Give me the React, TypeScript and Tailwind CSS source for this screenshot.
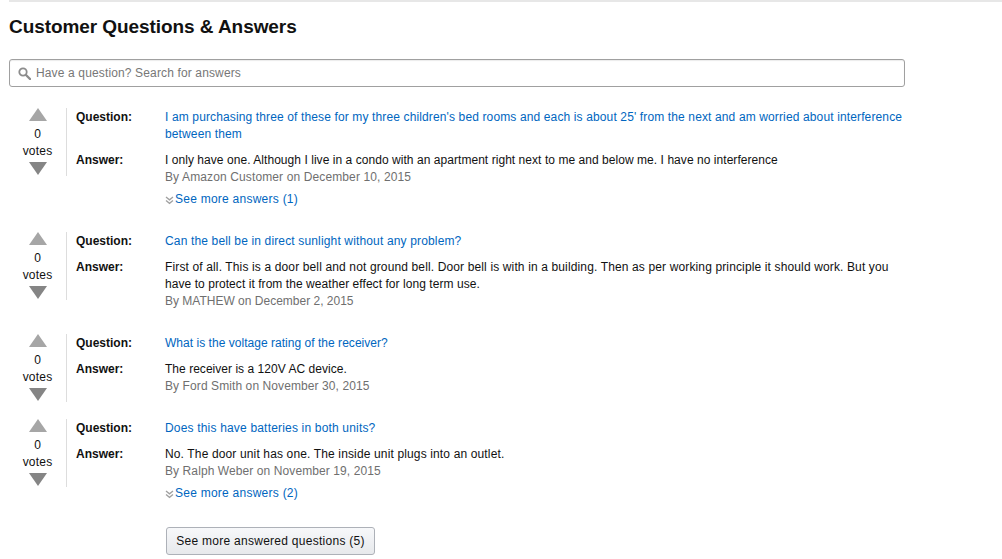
import type { ReactNode } from "react";

const rows: { q: string; qt: string; a: ReactNode; at: string; by: string; bt: string; more?: string }[] = [
  {
    q: "I am purchasing three of these for my three children's bed rooms and each is about 25' from the next and am worried about interference between them",
    qt: "tracking-[0.13px]",
    a: "I only have one. Although I live in a condo with an apartment right next to me and below me. I have no interference",
    at: "tracking-[0.05px]",
    by: "By Amazon Customer on December 10, 2015",
    bt: "tracking-[0.12px]",
    more: "See more answers (1)",
  },
  {
    q: "Can the bell be in direct sunlight without any problem?",
    qt: "tracking-[0.15px]",
    a: (
      <>
        <span className="tracking-[0.135px]">First of all. This is a door bell and not ground bell. Door bell is with in a building. Then as per working principle it should work. But you</span>
        <br />
        have to protect it from the weather effect for long term use.
      </>
    ),
    at: "tracking-[0.06px]",
    by: "By MATHEW on December 2, 2015",
    bt: "tracking-[0px]",
  },
  {
    q: "What is the voltage rating of the receiver?",
    qt: "tracking-[0.03px]",
    a: "The receiver is a 120V AC device.",
    at: "tracking-[0.03px]",
    by: "By Ford Smith on November 30, 2015",
    bt: "tracking-[0.09px]",
  },
  {
    q: "Does this have batteries in both units?",
    qt: "tracking-[0.18px]",
    a: "No. The door unit has one. The inside unit plugs into an outlet.",
    at: "tracking-[0.14px]",
    by: "By Ralph Weber on November 19, 2015",
    bt: "tracking-[0.09px]",
    more: "See more answers (2)",
  },
];

function Arrow({ down }: { down?: boolean }) {
  return (
    <svg width="18" height="13" viewBox="0 0 18 13" className="block mx-auto">
      <path d={down ? "M0 0H18L9 13Z" : "M9 0L18 13H0Z"} fill={down ? "#858585" : "#a6a6a6"} />
    </svg>
  );
}

export default function App() {
  return (
    <div className="w-[1002px] h-[559px] overflow-hidden bg-white pl-[9px] text-[12px] leading-[17px] text-[#111] font-['Liberation_Sans',Arial,sans-serif]">
      <div className="h-[2px] bg-[#e7e7e7]" />
      <h2 className="mt-[13px] text-[19px] leading-[24px] font-bold text-[#111] tracking-[-0.07px]">Customer Questions &amp; Answers</h2>
      <div className="mt-[20px] w-[896px] h-[28px] border border-[#a0a0a0] rounded-[3px] flex items-center pl-[8px] gap-[5px] text-[#777] tracking-[0.14px] shadow-[inset_0_1px_1px_rgba(0,0,0,0.08)]">
        <svg width="13" height="13" viewBox="0 0 13 13" fill="none" stroke="#8c8c8c">
          <circle cx="5" cy="5" r="3.7" strokeWidth="1.8" />
          <path d="M8 8L12 12" strokeWidth="2.4" strokeLinecap="round" />
        </svg>
        <span>Have a question? Search for answers</span>
      </div>
      <div className="mt-[21px] flex flex-col gap-[24px]">
        {rows.map((r, i) => (
          <div key={i} className="flex items-start">
            <div className="w-[58px] h-[68px] mb-[-8px] border-r border-[#ddd] shrink-0 text-center">
              <Arrow />
              <div className="mt-[5px]">0</div>
              <div className="tracking-[0.2px]">votes</div>
              <div className="mt-[2px]"><Arrow down /></div>
            </div>
            <div className="ml-[9px] pt-[1px] flex flex-col">
              <div className="flex">
                <div className="w-[89px] shrink-0 font-bold">Question:</div>
                <div className={"w-[740px] text-[#0066c0] " + r.qt}>{r.q}</div>
              </div>
              <div className="flex mt-[9px]">
                <div className="w-[89px] shrink-0 font-bold">Answer:</div>
                <div className="w-[740px]">
                  <div className={r.at}>{r.a}</div>
                  <div className={"text-[#6f6f6f] " + r.bt}>{r.by}</div>
                  {r.more && (
                    <div className="mt-[5px] flex items-center text-[#0066c0] tracking-[0.25px]">
                      <svg width="10" height="9" viewBox="0 0 10 9" fill="none" stroke="#a0a0a0" strokeWidth="1.3" className="mt-[1px]">
                        <path d="M1 1L4.5 3.8L8 1M1 4.5L4.5 7.3L8 4.5" />
                      </svg>
                      {r.more}
                    </div>
                  )}
                </div>
              </div>
            </div>
          </div>
        ))}
      </div>
      <div className="mt-[25px] ml-[157px] w-[209px] h-[28px] border border-[#adb1b8] rounded-[3px] bg-gradient-to-b from-[#f7f8fa] to-[#e7e9ec] flex items-center justify-center text-[#111] tracking-[0.27px]">
        See more answered questions (5)
      </div>
    </div>
  );
}
